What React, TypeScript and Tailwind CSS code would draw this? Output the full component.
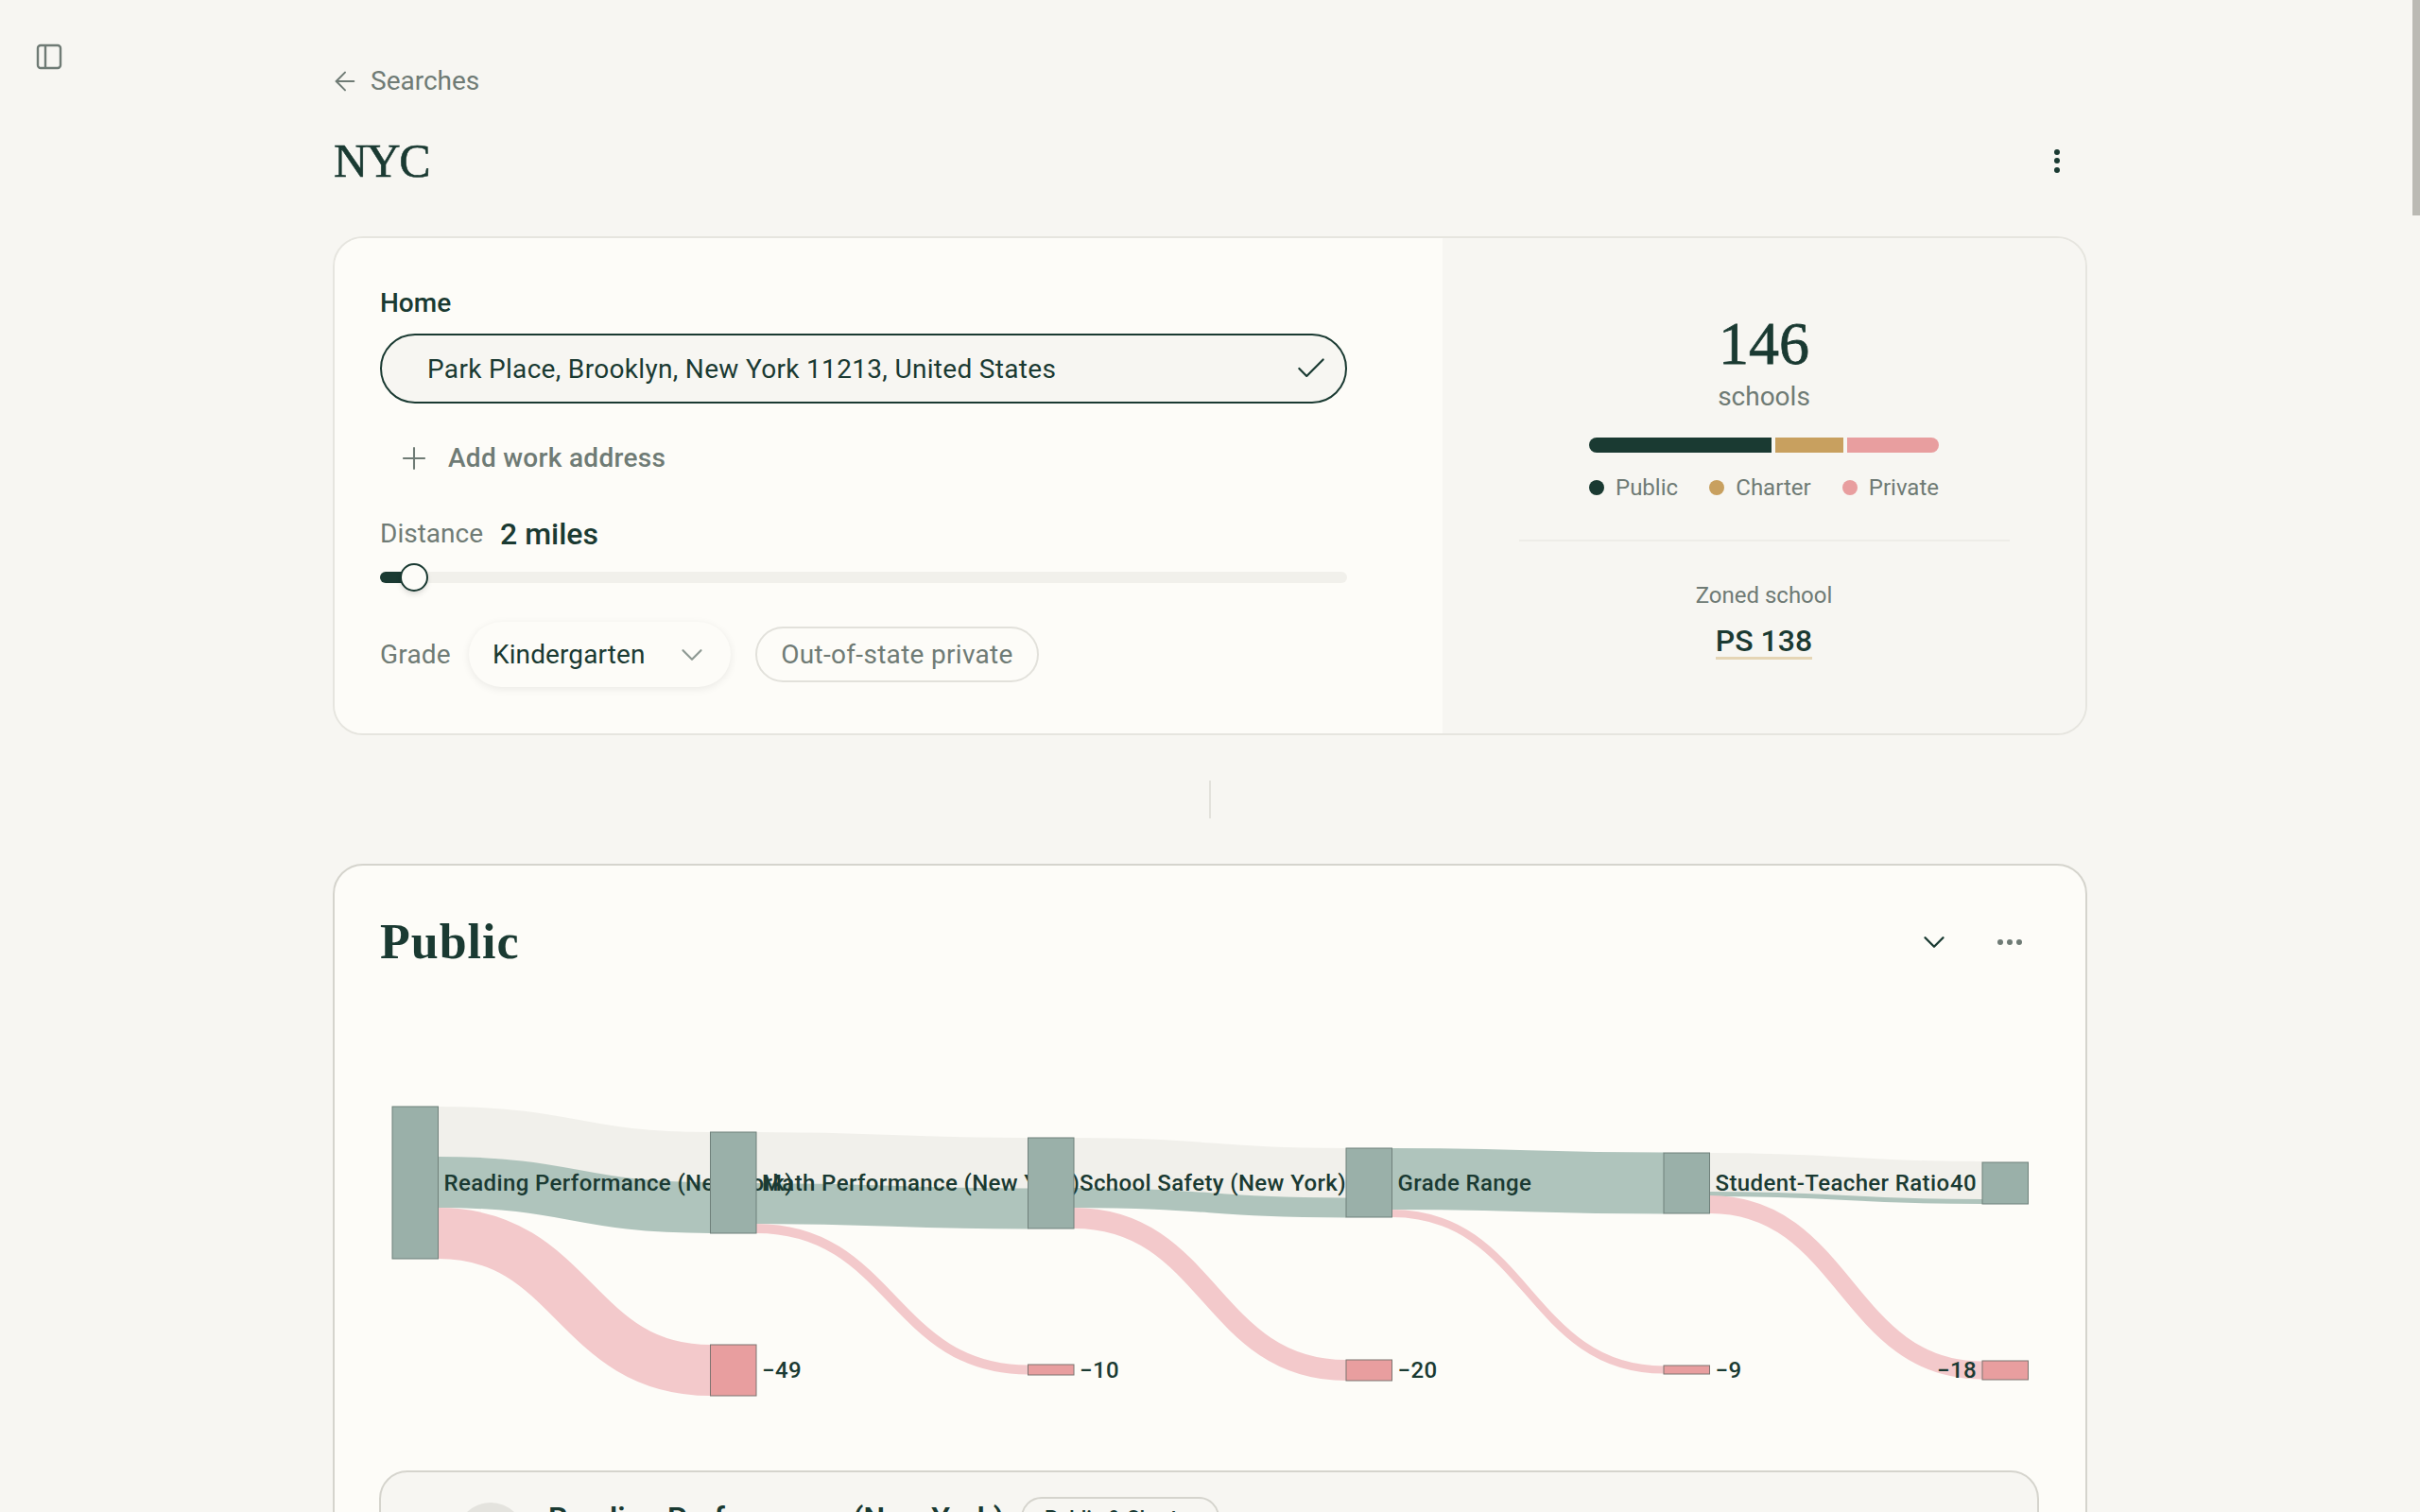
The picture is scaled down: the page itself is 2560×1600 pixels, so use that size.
import { ArrowLeft, Check, ChevronDown, Plus } from "lucide-react";

const DARK = "#1a3a32";
const nodeX = [415, 751.5, 1087.5, 1424, 1760, 2097];
const W = 48.5;

type L = [number, number, number, number, number, "g" | "s" | "p"];
const links: L[] = [
  [0, 1171, 1224, 1198, 1251, "g"],
  [0, 1224, 1278, 1251, 1305, "s"],
  [0, 1278, 1332, 1423, 1477, "p"],
  [1, 1198, 1252, 1204, 1258, "g"],
  [1, 1252, 1295, 1258, 1300, "s"],
  [1, 1295, 1305, 1444, 1455, "p"],
  [2, 1204, 1257, 1215, 1268, "g"],
  [2, 1257, 1278, 1268, 1288, "s"],
  [2, 1278, 1300, 1439, 1461, "p"],
  [3, 1215, 1280, 1220, 1284, "s"],
  [3, 1280, 1288, 1445, 1454, "p"],
  [4, 1220, 1261, 1230, 1269, "g"],
  [4, 1261, 1266, 1269, 1274, "s"],
  [4, 1265, 1284, 1440, 1460, "p"],
];
const linkColor = { g: "#f1f0eb", s: "#afc4bc", p: "#f3c9cb" };

const greenNodes = [
  [1171, 1332],
  [1198, 1305],
  [1204, 1300],
  [1215, 1288],
  [1220, 1284],
  [1230, 1274],
];
const pinkNodes: ([number, number] | null)[] = [
  null,
  [1423, 1477],
  [1444, 1455],
  [1439, 1461],
  [1445, 1454],
  [1440, 1460],
];
const labels = [
  "Reading Performance (New York)",
  "Math Performance (New York)",
  "School Safety (New York)",
  "Grade Range",
  "Student-Teacher Ratio",
];
const deltas = ["", "−49", "−10", "−20", "−9"];

function Sankey() {
  return (
    <svg width={1852} height={420} viewBox="354 1120 1852 420" className="mt-[95px] block font-['Roboto'] tracking-[0.38px]">
      {links.map(([i, a0, a1, b0, b1, k], n) => {
        const x0 = nodeX[i] + W;
        const x1 = nodeX[i + 1];
        const m = (x0 + x1) / 2;
        const y0 = (a0 + a1) / 2;
        const y1 = (b0 + b1) / 2;
        return (
          <path
            key={n}
            d={`M${x0} ${y0}C${m} ${y0} ${m} ${y1} ${x1} ${y1}`}
            fill="none"
            stroke={linkColor[k]}
            strokeWidth={a1 - a0}
          />
        );
      })}
      {nodeX.map((x, i) => {
        const [t, b] = greenNodes[i];
        const p = pinkNodes[i];
        return (
          <g key={i}>
            <rect x={x} y={t} width={W} height={b - t} fill="#9ab0a9" stroke="#6f807a" strokeWidth={1} />
            {p && <rect x={x} y={p[0]} width={W} height={p[1] - p[0]} fill="#e89e9f" stroke="#7d7470" strokeWidth={1} />}
            {i < 5 && (
              <text x={x + W + 6} y={1260} fill={DARK} fontSize={24} fontWeight={500}>
                {labels[i]}
              </text>
            )}
            {i > 0 && i < 5 && (
              <text x={x + W + 6} y={1458} fill={DARK} fontSize={24} fontWeight={500}>
                {deltas[i]}
              </text>
            )}
          </g>
        );
      })}
      <text x={2091} y={1260} textAnchor="end" fill={DARK} fontSize={24} fontWeight={500}>40</text>
      <text x={2091} y={1458} textAnchor="end" fill={DARK} fontSize={24} fontWeight={500}>−18</text>
    </svg>
  );
}

export default function App() {
  return (
    <div className="relative h-[1600px] overflow-hidden bg-[#f7f6f2] font-['Roboto'] text-[#1a3a32]">
      <svg className="absolute left-[38px] top-[46px]" width="28" height="28" viewBox="0 0 28 28" fill="none" stroke="#6f7b75" strokeWidth="2.4">
        <rect x="2" y="2" width="24" height="24" rx="3" />
        <path d="M10 2v24" />
      </svg>
      <div className="absolute right-0 top-0 h-[228px] w-2 bg-[#bbbab4]" />

      <div className="mx-auto w-[1856px] pt-[71px]">
        <div className="flex h-[30px] items-center text-[28px] text-[#6f7b75]">
          <ArrowLeft size={32} strokeWidth={1.5} className="-ml-[3px]" />
          <span className="ml-[11px]">Searches</span>
        </div>
        <div className="mt-[39px] flex h-[60px] items-center justify-between pr-[26px]">
          <h1 className="ml-[1px] font-['Liberation_Serif'] text-[50px] leading-[60px] tracking-[-1.5px] text-[#1a3a32] [-webkit-text-stroke:0.6px_#1a3a32]">NYC</h1>
          <div className="flex w-[12px] flex-col items-center gap-[3.5px]">
            <span className="size-[6px] rounded-full bg-[#1a3a32]" />
            <span className="size-[6px] rounded-full bg-[#1a3a32]" />
            <span className="size-[6px] rounded-full bg-[#1a3a32]" />
          </div>
        </div>

        <div className="mt-[50px] flex h-[528px] overflow-hidden rounded-[32px] border-2 border-[#e6e5df]">
          <div className="w-[1172px] bg-[#fdfcf8] pl-[48px] pt-[54px]">
            <div className="h-[30px] text-[28px] leading-[30px] font-medium">Home</div>
            <div className="mt-[17px] flex h-[74px] w-[1023px] items-center justify-between rounded-full border-2 border-[#1a3a32] bg-[#f7f6f2] pl-[48px] pr-[17px] text-[28px]">
              <span className="pt-[2px] tracking-[0.32px]">Park Place, Brooklyn, New York 11213, United States</span>
              <Check size={38} strokeWidth={1.4} />
            </div>
            <div className="mt-[43px] flex h-[30px] items-center gap-[17px] pl-[17px] text-[28px] font-medium tracking-[0.3px] text-[#6f7b75]">
              <Plus size={38} strokeWidth={1.3} />
              <span>Add work address</span>
            </div>
            <div className="mt-[48px] flex h-[34px] items-center gap-[18px]">
              <span className="text-[28px] text-[#6f7b75]">Distance</span>
              <span className="text-[32px] font-medium">2 miles</span>
            </div>
            <div className="relative mt-[14px] flex h-[30px] w-[1023px] items-center">
              <div className="h-[12px] w-full rounded-full bg-[#f1f0eb]">
                <div className="h-full w-[30px] rounded-l-full bg-[#1a3a32]" />
              </div>
              <div className="absolute left-[21px] top-0 size-[30px] rounded-full border-2 border-[#1a3a32] bg-[#fdfcf8] shadow-md" />
            </div>
            <div className="mt-[32px] flex items-center">
              <span className="w-[94px] text-[28px] tracking-[0.2px] text-[#6f7b75]">Grade</span>
              <div className="flex h-[69px] w-[277px] items-center justify-between rounded-full bg-[#fdfcf8] pl-[25px] pr-[22px] text-[28px] tracking-[0.1px] shadow-[0_2px_8px_rgba(0,0,0,0.08)]">
                <span>Kindergarten</span>
                <ChevronDown size={38} strokeWidth={1.4} className="text-[#8f9a94]" />
              </div>
              <div className="ml-[26px] flex h-[59px] w-[300px] items-center justify-center rounded-full border-2 border-[#e2e1db] text-[28px] tracking-[0.3px] text-[#6f7b75]">
                Out-of-state private
              </div>
            </div>
          </div>
          <div className="flex flex-1 flex-col items-center bg-[#f7f6f2] pt-[77px]">
            <div className="h-[70px] font-['Liberation_Serif'] text-[64px] leading-[70px] [-webkit-text-stroke:0.8px_#1a3a32]">146</div>
            <div className="mt-[3px] h-[36px] text-[28px] leading-[36px] text-[#6f7b75]">schools</div>
            <div className="mt-[25px] flex h-[16px] w-[370px] gap-[4px]">
              <div className="w-[193px] rounded-l-full bg-[#1a3a32]" />
              <div className="w-[72px] bg-[#c8a05f]" />
              <div className="w-[97px] rounded-r-full bg-[#e89e9f]" />
            </div>
            <div className="mt-[22px] flex h-[30px] w-[370px] items-center justify-between text-[24px] text-[#6f7b75]">
              <span className="flex items-center gap-[12px]"><span className="size-[16px] rounded-full bg-[#1a3a32]" />Public</span>
              <span className="flex items-center gap-[12px]"><span className="size-[16px] rounded-full bg-[#c8a05f]" />Charter</span>
              <span className="flex items-center gap-[12px]"><span className="size-[16px] rounded-full bg-[#e89e9f]" />Private</span>
            </div>
            <div className="mt-[40px] h-[2px] w-[519px] bg-[#eeede8]" />
            <div className="mt-[42px] h-[30px] text-[24px] leading-[30px] text-[#6f7b75]">Zoned school</div>
            <div className="mt-[15px] h-[38px] border-b-[3px] border-[#e5d5b5] text-[32px] leading-[36px] font-medium">PS 138</div>
          </div>
        </div>

        <div className="ml-[927px] mt-[48px] h-[40px] w-[2px] bg-[#e2e1db]" />

        <div className="mt-[48px] h-[800px] rounded-[32px] border-2 border-[#d5d4cd] bg-[#fdfcf8] pt-[53px]">
          <div className="flex h-[56px] items-center justify-between pl-[48px] pr-[67px]">
            <h2 className="font-['Liberation_Serif'] text-[52px] leading-[56px] font-bold tracking-[1px]">Public</h2>
            <div className="flex items-center gap-[48px]">
              <ChevronDown size={38} strokeWidth={1.5} />
              <svg width="26" height="6" viewBox="0 0 26 6" fill="#6f7b75">
                <circle cx="3" cy="3" r="3" />
                <circle cx="13" cy="3" r="3" />
                <circle cx="23" cy="3" r="3" />
              </svg>
            </div>
          </div>
          <Sankey />
          <div className="ml-[47px] mt-[16px] h-[200px] w-[1756px] rounded-[30px] border-2 border-[#d5d4cd] bg-[#f7f6f2] pl-[80px] pt-[26px]">
            <div className="flex items-start">
              <div className="mt-[6px] size-[72px] rounded-full bg-[#e4e3de]" />
              <div className="ml-[25px] mt-[2px] text-[32px] leading-[40px] font-semibold tracking-[0.1px]">Reading Performance (New York)</div>
              <div className="ml-[18px] flex h-[44px] w-[210px] items-center justify-center rounded-full border-2 border-[#d5d4cd] text-[22px] font-medium">Public &amp; Charter</div>
            </div>
          </div>
        </div>
      </div>
    </div>
  );
}
